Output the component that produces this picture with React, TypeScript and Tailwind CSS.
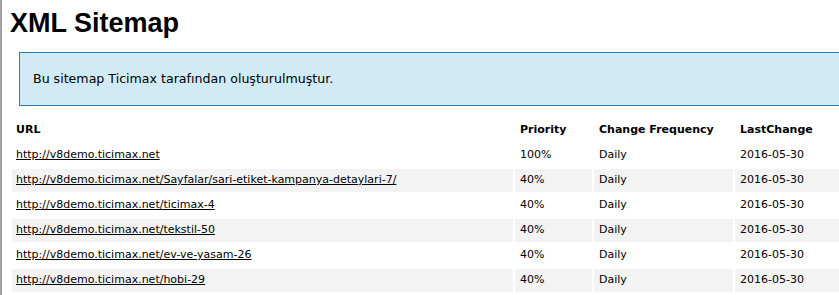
const rows = [
  { url: 'http://v8demo.ticimax.net', priority: '100%' },
  { url: 'http://v8demo.ticimax.net/Sayfalar/sari-etiket-kampanya-detaylari-7/', priority: '40%' },
  { url: 'http://v8demo.ticimax.net/ticimax-4', priority: '40%' },
  { url: 'http://v8demo.ticimax.net/tekstil-50', priority: '40%' },
  { url: 'http://v8demo.ticimax.net/ev-ve-yasam-26', priority: '40%' },
  { url: 'http://v8demo.ticimax.net/hobi-29', priority: '40%' },
];

export default function App() {
  return (
    <div className="h-[295px] w-[839px] overflow-hidden bg-white border-l-2 border-[#a3a3a3] font-['DejaVu_Sans',sans-serif] text-black">
      <div className="w-[880px] pl-[8px]">
        {/* Title */}
        <h1 className="pt-[5px] h-[52px] font-['Liberation_Sans',sans-serif] text-[27px] font-bold leading-[36px]">XML Sitemap</h1>

        {/* Info box */}
        <div className="ml-[9px] h-[54px] border border-[#2a7cb5] bg-[#d0eaf6] pl-[13px] flex items-center text-[12.6px]">
          Bu sitemap Ticimax tarafından oluşturulmuştur.
        </div>

        {/* Table */}
        <table className="mt-[11px] border-separate border-spacing-[2px] text-[11px]">
          <thead>
            <tr className="h-[23px]">
              <th className="w-[501px] pl-[4px] pr-[5px] text-left font-bold">URL</th>
              <th className="w-[77px] px-[5px] text-left font-bold">Priority</th>
              <th className="w-[139px] px-[5px] text-left font-bold">Change Frequency</th>
              <th className="w-[140px] px-[5px] text-left font-bold">LastChange</th>
            </tr>
          </thead>
          <tbody>
            {rows.map((r, i) => (
              <tr key={r.url} className={`h-[23px] ${i % 2 === 1 ? 'bg-[#f3f3f3]' : ''}`}>
                <td className="pl-[4px] pr-[5px]"><a href="#" className="underline">{r.url}</a></td>
                <td className="px-[5px]">{r.priority}</td>
                <td className="px-[5px]">Daily</td>
                <td className="px-[5px]">2016-05-30</td>
              </tr>
            ))}
          </tbody>
        </table>
      </div>
    </div>
  );
}
